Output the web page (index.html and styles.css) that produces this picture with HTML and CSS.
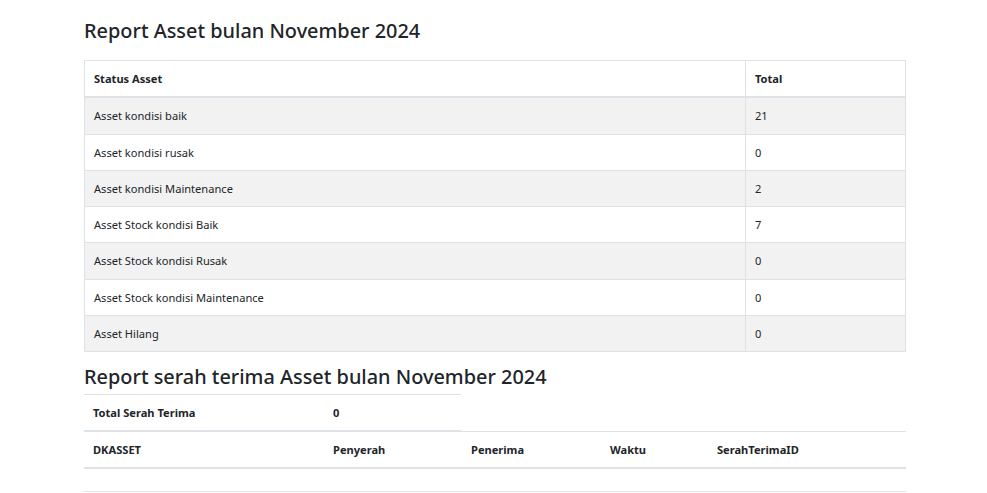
FILE: index.html
```html
<!DOCTYPE html>
<html>
<head>
<meta charset="utf-8">
<link rel="stylesheet" href="styles.css">
</head>
<body>
<div class="container">
  <h3 class="title first">Report Asset bulan November 2024</h3>
  <table class="tbl bordered striped">
    <colgroup><col class="c-status"><col></colgroup>
    <thead><tr><th>Status Asset</th><th>Total</th></tr></thead>
    <tbody>
      <tr><td>Asset kondisi baik</td><td>21</td></tr>
      <tr><td>Asset kondisi rusak</td><td>0</td></tr>
      <tr><td>Asset kondisi Maintenance</td><td>2</td></tr>
      <tr><td>Asset Stock kondisi Baik</td><td>7</td></tr>
      <tr><td>Asset Stock kondisi Rusak</td><td>0</td></tr>
      <tr><td>Asset Stock kondisi Maintenance</td><td>0</td></tr>
      <tr><td>Asset Hilang</td><td>0</td></tr>
    </tbody>
  </table>
  <h3 class="title second">Report serah terima Asset bulan November 2024</h3>
  <table class="tbl summary">
    <colgroup><col class="c-a"><col></colgroup>
    <thead><tr><th>Total Serah Terima</th><th>0</th></tr></thead>
  </table>
  <table class="tbl detail">
    <colgroup><col class="c-a"><col class="c-b"><col class="c-c"><col class="c-d"><col></colgroup>
    <thead><tr><th>DKASSET</th><th>Penyerah</th><th>Penerima</th><th>Waktu</th><th>SerahTerimaID</th></tr></thead>
    <tbody></tbody>
  </table>
  <hr class="rule">
</div>
</body>
</html>
```
FILE: styles.css
```css
html, body {
  margin: 0;
  padding: 0;
  background: #fff;
}
body {
  font-family: "Noto Sans", "Open Sans", sans-serif;
  font-size: 11.1px;
  line-height: 17.3px;
  color: #212529;
}
.container {
  width: 822px;
  margin: 0 0 0 84px;
}
.title {
  margin: 0 0 6px 0;
  font-size: 19.9px;
  line-height: 25px;
  font-weight: 500;
}
.title.first {
  padding-top: 18px;
  margin-bottom: 17px;
}
.title.second {
  margin-bottom: 5px;
}
.tbl {
  border-collapse: collapse;
  width: 100%;
}
.tbl th, .tbl td {
  text-align: left;
  padding: 9px 9px;
  border-top: 1px solid #dee2e6;
  vertical-align: top;
}
.tbl th {
  font-weight: 700;
}
.tbl thead th {
  border-bottom: 2px solid #dee2e6;
}
.bordered {
  border: 1px solid #dee2e6;
  margin-bottom: 12px;
}
.bordered th, .bordered td {
  border: 1px solid #dee2e6;
}
.bordered thead th {
  border-bottom-width: 2px;
}
.striped tbody tr:nth-child(odd) {
  background: #f2f2f2;
}
.c-status { width: 661px; }
.summary {
  width: 377px;
}
.summary th {
  padding-bottom: 8.7px;
}
.summary thead th {
  border-bottom-width: 1px;
}
.c-a { width: 240px; }
.c-b { width: 138px; }
.c-c { width: 139px; }
.c-d { width: 107px; }
.detail {
  margin-bottom: 0;
}
.detail th {
  padding-top: 8.5px;
  padding-bottom: 8.5px;
}
.rule {
  margin: 22px 0 0 0;
  border: 0;
  border-top: 1px solid #e6e6e6;
}
```
